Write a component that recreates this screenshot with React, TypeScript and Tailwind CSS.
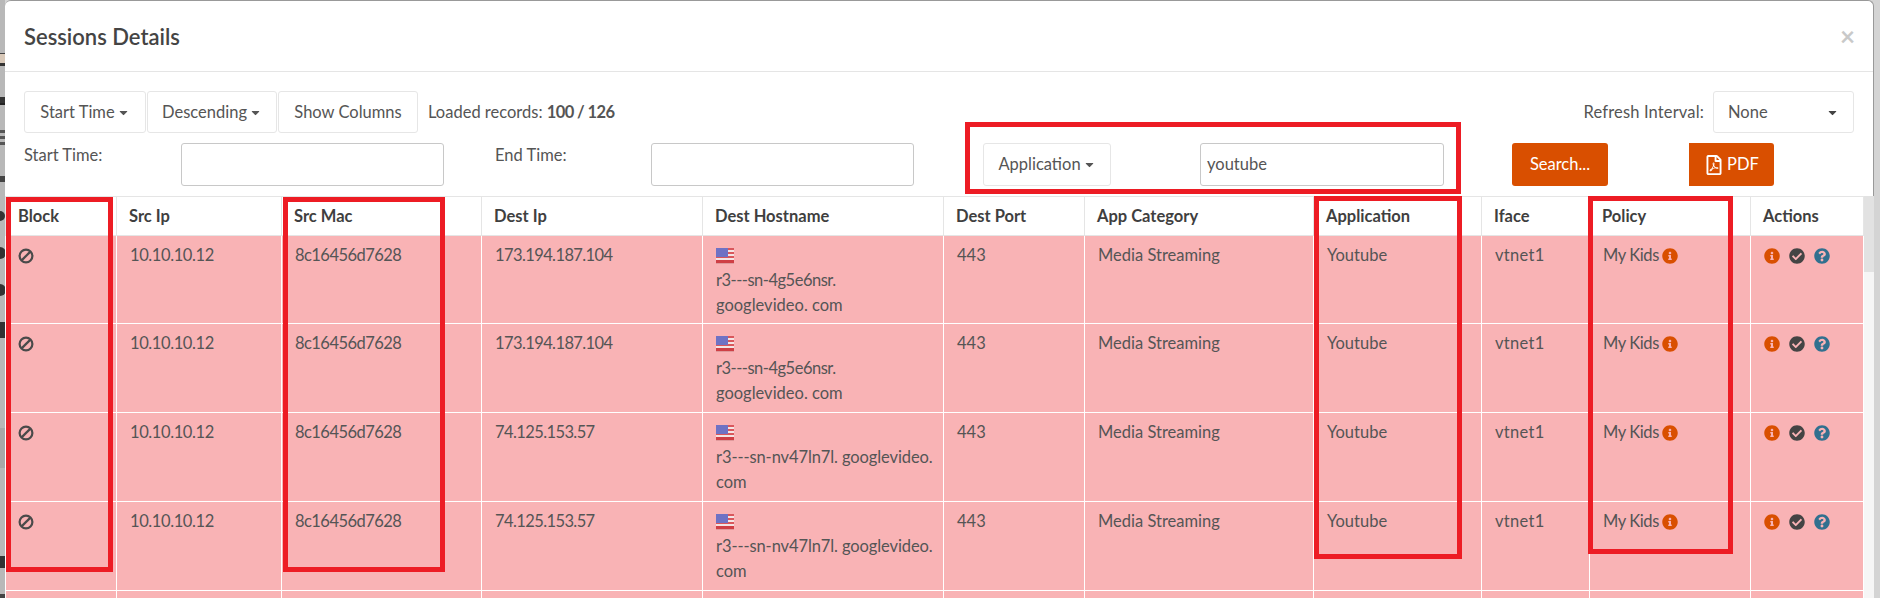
import { FaCaretDown, FaCheckCircle, FaInfoCircle, FaQuestionCircle, FaRegFilePdf } from "react-icons/fa";

const rows = [
  { dest: "173.194.187.104", host: ["r3---sn-4g5e6nsr.", "googlevideo. com"], track: ["tracking-[-0.5px]", ""], h: "h-[88px]" },
  { dest: "173.194.187.104", host: ["r3---sn-4g5e6nsr.", "googlevideo. com"], track: ["tracking-[-0.5px]", ""], h: "h-[89px]" },
  { dest: "74.125.153.57", host: ["r3---sn-nv47ln7l. googlevideo.", "com"], track: ["tracking-[-0.1px]", ""], h: "h-[89px]" },
  { dest: "74.125.153.57", host: ["r3---sn-nv47ln7l. googlevideo.", "com"], track: ["tracking-[-0.1px]", ""], h: "h-[89px]" },
];

const columns = [
  { label: "Block", w: "w-[111px]" },
  { label: "Src Ip", w: "w-[165px]" },
  { label: "Src Mac", w: "w-[200px]" },
  { label: "Dest Ip", w: "w-[221px]" },
  { label: "Dest Hostname", w: "w-[241px]" },
  { label: "Dest Port", w: "w-[141px]" },
  { label: "App Category", w: "w-[229px]" },
  { label: "Application", w: "w-[168px]" },
  { label: "Iface", w: "w-[108px]" },
  { label: "Policy", w: "w-[161px]" },
  { label: "Actions", w: "w-[113px]" },
];

const btn =
  "flex h-[42px] items-center justify-center rounded-[3px] border border-[#e6e6e6] bg-white text-[#555]";
const input = "h-[43px] rounded-[3px] border border-[#c8c8c8] bg-white";
const orangeBtn = "flex h-[43px] items-center justify-center bg-[#d94f00] text-white";
const cell = "border border-white px-[13px] pt-[7px] align-top";
const redBox = "pointer-events-none absolute border-[5px] border-[#ed1c24]";

function BanIcon() {
  return (
    <svg width="16" height="16" viewBox="0 0 16 16" className="-ml-px" aria-hidden>
      <circle cx="8" cy="8" r="6.4" fill="none" stroke="#4a4a4a" strokeWidth="2.2" />
      <line x1="3.6" y1="12.4" x2="12.4" y2="3.6" stroke="#4a4a4a" strokeWidth="2.2" />
    </svg>
  );
}

function UsFlag() {
  return (
    <svg width="18" height="16" viewBox="0 0 18 16" aria-hidden>
      <rect x="0" y="0" width="18" height="15" fill="#f3e4e4" />
      <rect x="0" y="0" width="18" height="2" fill="#d9575c" />
      <rect x="0" y="4" width="18" height="2" fill="#d9575c" />
      <rect x="0" y="8" width="18" height="2" fill="#d9575c" />
      <rect x="0" y="12" width="18" height="3" fill="#cf3f45" />
      <rect x="0" y="0" width="12" height="9" fill="#6f72c4" />
      <rect x="0" y="15" width="18" height="1" fill="#e09a9c" />
    </svg>
  );
}

// bits of the page behind the modal that stick out on the left
function BackdropBits() {
  return (
    <svg className="absolute left-0 top-0" width="5" height="598" viewBox="0 0 5 598" aria-hidden>
      <rect x="0" y="53" width="5" height="1" fill="#444" />
      <rect x="0" y="54" width="5" height="9" fill="#d8c8b8" />
      <rect x="0" y="63" width="5" height="3" fill="#333" />
      <rect x="0" y="97" width="5" height="8" fill="#333" />
      <rect x="0" y="103" width="5" height="2" fill="#222" />
      <rect x="0" y="130" width="5" height="3" fill="#555" />
      <rect x="0" y="136" width="5" height="3" fill="#555" />
      <rect x="0" y="142" width="5" height="3" fill="#555" />
      <rect x="0" y="176" width="5" height="6" fill="#444" />
      <circle cx="0" cy="216" r="5" fill="#333" />
      <circle cx="0" cy="253" r="6" fill="#333" />
      <circle cx="0" cy="290" r="6" fill="#333" />
      <rect x="0" y="322" width="5" height="16" fill="#333" />
      <rect x="0" y="428" width="5" height="40" fill="#a8a8a8" />
      <rect x="0" y="556" width="5" height="12" fill="#333" />
      <rect x="0" y="594" width="5" height="4" fill="#444" />
    </svg>
  );
}

export default function App() {
  return (
    <div className="relative h-[598px] w-[1880px] overflow-hidden bg-[#d4d4d4] pr-[6px] pl-[5px] font-['Lato',sans-serif] text-[16.5px] leading-[25px] text-[#555]">
      <div className="absolute inset-y-0 left-0 w-[5px] bg-[#b8b8b8]">
        <BackdropBits />
      </div>

      <div className="relative h-[700px] rounded-t-[6px] border-t border-r border-[#999] bg-white">
        <div className="flex h-[71px] items-center justify-between border-b border-[#e5e5e5] pr-[18px] pl-[19px]">
          <h4 className="text-[22px] font-semibold text-[#444]">Sessions Details</h4>
          <span className="text-[26px] leading-none font-bold text-[#c9c9c9]">×</span>
        </div>

        <div className="mt-[19px] flex h-[42px] items-center pr-[19px] pl-[19px]">
          <div className={`${btn} w-[122px] gap-[2px]`}>
            Start Time <FaCaretDown className="size-[13px]" />
          </div>
          <div className={`${btn} ml-px w-[130px] gap-[2px]`}>
            Descending <FaCaretDown className="size-[13px]" />
          </div>
          <div className={`${btn} ml-px w-[140px]`}>Show Columns</div>
          <div className="ml-[10px]">
            Loaded records: <b className="font-bold tracking-[-0.6px]">100 / 126</b>
          </div>
          <div className="ml-auto tracking-[0.15px]">Refresh Interval:</div>
          <div className={`${btn} ml-[9px] w-[141px] justify-between! pr-[14px] pl-[14px]`}>
            None <FaCaretDown className="size-[13px] text-[#444]" />
          </div>
        </div>

        <div className="mt-[10px] flex pl-[19px]">
          <div className="w-[157px]">Start Time:</div>
          <div className={`${input} w-[263px]`} />
          <div className="ml-[51px] w-[156px]">End Time:</div>
          <div className={`${input} w-[263px]`} />
          <div className={`${btn} ml-[69px] h-[43px]! w-[128px] gap-[2px]`}>
            Application <FaCaretDown className="size-[13px]" />
          </div>
          <div className={`${input} ml-[89px] flex w-[244px] items-center pl-[6px]`}>youtube</div>
          <div className={`${orangeBtn} ml-[68px] w-[96px] rounded-[3px]`}>Search...</div>
          <div className={`${orangeBtn} ml-[81px] w-[85px] gap-[3px] rounded-r-[3px]`}>
            <FaRegFilePdf className="size-[20px]" /> PDF
          </div>
        </div>

        <div className="mt-[10px] flex">
          <table className="w-[1858px] shrink-0 table-fixed border-collapse">
            <colgroup>
              {columns.map((c) => (
                <col key={c.label} className={c.w} />
              ))}
            </colgroup>
            <thead>
              <tr className="h-[39px]">
                {columns.map((c) => (
                  <th
                    key={c.label}
                    className="border border-[#e5e5e5] px-[12px] text-left font-bold text-[#3f3f3f]"
                  >
                    {c.label}
                  </th>
                ))}
              </tr>
            </thead>
            <tbody className="bg-[#f9b3b5]">
              {rows.map((r, i) => (
                <tr key={i} className={r.h}>
                  <td className={cell}>
                    <div className="flex h-[25px] items-center">
                      <BanIcon />
                    </div>
                  </td>
                  <td className={`${cell} tracking-[-0.4px]`}>10.10.10.12</td>
                  <td className={`${cell} tracking-[-0.55px]`}>8c16456d7628</td>
                  <td className={`${cell} tracking-[-0.6px]`}>{r.dest}</td>
                  <td className={cell}>
                    <div className="flex h-[25px] items-center">
                      <UsFlag />
                    </div>
                    {r.host.map((line, n) => (
                      <div key={line} className={`whitespace-nowrap ${r.track[n]}`}>
                        {line}
                      </div>
                    ))}
                  </td>
                  <td className={cell}>443</td>
                  <td className={cell}>Media Streaming</td>
                  <td className={cell}>Youtube</td>
                  <td className={`${cell} tracking-[0.3px]`}>vtnet1</td>
                  <td className={cell}>
                    <div className="flex h-[25px] items-center gap-[3px] tracking-[-0.4px]">
                      My Kids <FaInfoCircle className="size-[16px] text-[#d94f00]" />
                    </div>
                  </td>
                  <td className={cell}>
                    <div className="flex h-[25px] items-center gap-[9px]">
                      <FaInfoCircle className="size-[16px] text-[#d94f00]" />
                      <FaCheckCircle className="size-[16px] text-[#444]" />
                      <FaQuestionCircle className="size-[16px] text-[#31708f]" />
                    </div>
                  </td>
                </tr>
              ))}
              <tr className="h-[89px]">
                {columns.map((c) => (
                  <td key={c.label} className={cell} />
                ))}
              </tr>
            </tbody>
          </table>
          <div className="w-[10px] shrink-0 bg-[#f6f6f6]">
            <div className="h-[76px] bg-[#e2e2e2]" />
          </div>
        </div>
      </div>

      <div className={`${redBox} top-[122px] left-[965px] h-[72px] w-[496px]`} />
      <div className={`${redBox} top-[197px] left-[6px] h-[375px] w-[107px]`} />
      <div className={`${redBox} top-[197px] left-[283px] h-[375px] w-[162px]`} />
      <div className={`${redBox} top-[196px] left-[1314px] h-[363px] w-[148px]`} />
      <div className={`${redBox} top-[196px] left-[1588px] h-[358px] w-[145px]`} />
    </div>
  );
}
